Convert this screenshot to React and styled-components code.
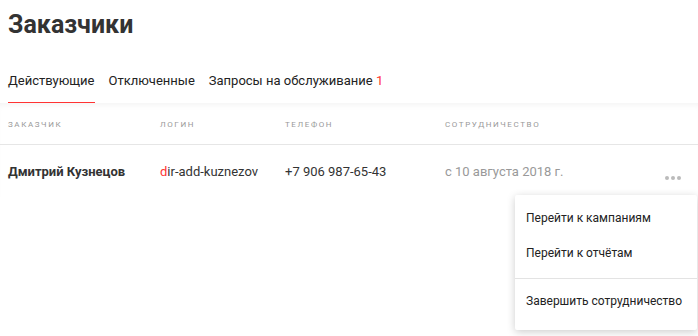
import React from "react";
import styled, { createGlobalStyle } from "styled-components";

const Global = createGlobalStyle`
  body {
    margin: 0;
    background: #fff;
    font-family: Roboto, "Noto Sans", Arial, sans-serif;
    color: #333;
  }
`;

const Page = styled.div`
  width: 698px;
  height: 336px;
  overflow: hidden;
  position: relative;
`;

const Title = styled.h1`
  margin: 0;
  padding: 9px 8px 0;
  font-size: 25px;
  line-height: 32px;
  font-weight: 700;
  color: #333;
`;

const Tabs = styled.div`
  display: flex;
  gap: 14px;
  padding: 31px 8px 0;
`;

const Tab = styled.div`
  font-size: 13px;
  line-height: 18px;
  padding-bottom: 12px;
  color: #222;
  border-bottom: 1px solid ${(p) => (p.$active ? "#f33" : "transparent")};
`;

const Count = styled.span`
  color: #f33;
`;

const Table = styled.div`
  box-shadow: inset 0 6px 6px -4px rgba(0, 0, 0, 0.05);
`;

const Row = styled.div`
  display: grid;
  grid-template-columns: 152px 125px 160px 1fr 40px;
  padding: 0 8px;
  align-items: center;
`;

const HeadRow = styled(Row)`
  height: 41px;
  border-bottom: 1px solid #e6e6e6;
`;

const HeadCell = styled.div`
  font-size: 8px;
  letter-spacing: 1.6px;
  text-transform: uppercase;
  color: #999;
  padding-top: 1px;
`;

const DataRow = styled(Row)`
  height: 52px;
`;

const Cell = styled.div`
  font-size: 13px;
  color: ${(p) => (p.$muted ? "#999" : "#333")};
  font-weight: ${(p) => (p.$bold ? 700 : 400)};
  white-space: nowrap;
`;

const Red = styled.span`
  color: #f33;
`;

const More = styled.div`
  justify-self: end;
  display: flex;
  gap: 2px;
  margin-right: 9px;
  margin-top: 13px;
`;

const Dot = styled.span`
  width: 4px;
  height: 4px;
  border-radius: 50%;
  background: #bbb;
`;

const Menu = styled.div`
  position: absolute;
  left: 515px;
  top: 195px;
  width: 182px;
  background: #fff;
  box-shadow: 0 2px 8px rgba(0, 0, 0, 0.2);
  border-radius: 2px;
  padding: 6px 0 11px;
`;

const MenuItem = styled.div`
  font-size: 12px;
  line-height: 35px;
  padding: 0 11px;
  color: #222;
  white-space: nowrap;
`;

const MenuDivider = styled.div`
  height: 1px;
  background: #e3e3e3;
  margin: 7px 0 5px;
`;

export default function App() {
  return (
    <Page>
      <Global />
      <Title>Заказчики</Title>
      <Tabs>
        <Tab $active>Действующие</Tab>
        <Tab>Отключенные</Tab>
        <Tab>
          Запросы на обслуживание <Count>1</Count>
        </Tab>
      </Tabs>
      <Table>
        <HeadRow>
          <HeadCell>Заказчик</HeadCell>
          <HeadCell>Логин</HeadCell>
          <HeadCell>Телефон</HeadCell>
          <HeadCell>Сотрудничество</HeadCell>
          <span />
        </HeadRow>
        <DataRow>
          <Cell $bold>Дмитрий Кузнецов</Cell>
          <Cell>
            <Red>d</Red>ir-add-kuznezov
          </Cell>
          <Cell>+7 906 987-65-43</Cell>
          <Cell $muted>с 10 августа 2018 г.</Cell>
          <More>
            <Dot />
            <Dot />
            <Dot />
          </More>
        </DataRow>
      </Table>
      <Menu>
        <MenuItem>Перейти к кампаниям</MenuItem>
        <MenuItem>Перейти к отчётам</MenuItem>
        <MenuDivider />
        <MenuItem>Завершить сотрудничество</MenuItem>
      </Menu>
    </Page>
  );
}
